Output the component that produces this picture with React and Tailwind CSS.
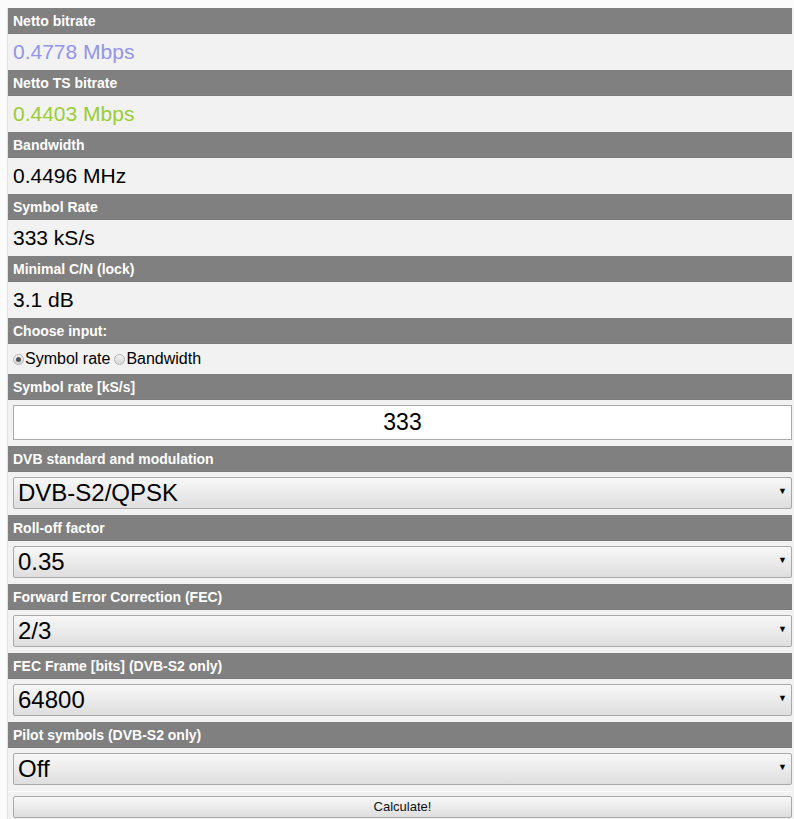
import React, { useState } from 'react'

const Header = ({ children }) => (
    <div className='h-[26px] bg-[#808080] text-white font-bold text-[14px] leading-[26px] pl-[5px] border-b border-[#7a7a7a]'>{children}</div>
)

const Value = ({ children, color }) => (
    <div className={`h-[36px] pl-[5px] text-[21px] leading-[36px] ${color}`}>{children}</div>
)

const Radio = ({ checked, label, onClick }) => (
    <span className='flex items-center cursor-pointer' onClick={onClick}>
        <span className='w-[11px] h-[11px] rounded-full border border-[#b4b4b4] bg-gradient-to-b from-[#f4f4f4] to-[#d6d6d6] flex items-center justify-center mr-[1px]'>
            {checked && <span className='w-[5px] h-[5px] rounded-full bg-[#555]' />}
        </span>
        {label}
    </span>
)

const Select = ({ value, options }) => (
    <div className='h-[43px] pl-[5px] pt-[5px]'>
        <div className='relative h-[32px]'>
            <select
                defaultValue={value}
                className='appearance-none w-full h-full border border-[#a9a9a9] rounded-[2px] bg-gradient-to-b from-[#f8f8f8] to-[#dedede] text-[24px] leading-[30px] pl-[4px] text-black outline-none'
            >
                {options.map((o) => <option key={o} value={o}>{o}</option>)}
            </select>
            <span className='absolute right-[5px] top-[10px] text-[9px] leading-none text-black pointer-events-none'>▼</span>
        </div>
    </div>
)

export default function App() {
    const [mode, setMode] = useState('symbol')
    return (
        <div className='min-h-[819px] bg-[#fbfbfb] pt-[8px] pl-[7px]' style={{ fontFamily: '"Liberation Sans", Arial, sans-serif' }}>
            <div className='bg-[#f2f2f2] border-l border-[#e2e2e2] pr-[2px] text-[#111]'>
                <Header>Netto bitrate</Header>
                <Value color='text-[#9494ee]'>0.4778 Mbps</Value>
                <Header>Netto TS bitrate</Header>
                <Value color='text-[#9acd32]'>0.4403 Mbps</Value>
                <Header>Bandwidth</Header>
                <Value color='text-black'>0.4496 MHz</Value>
                <Header>Symbol Rate</Header>
                <Value color='text-black'>333 kS/s</Value>
                <Header>Minimal C/N (lock)</Header>
                <Value color='text-black'>3.1 dB</Value>
                <Header>Choose input:</Header>
                <div className='h-[30px] pl-[5px] flex items-center text-[16px] text-black'>
                    <Radio checked={mode === 'symbol'} label='Symbol rate' onClick={() => setMode('symbol')} />
                    <span className='w-[4px]' />
                    <Radio checked={mode === 'bandwidth'} label='Bandwidth' onClick={() => setMode('bandwidth')} />
                </div>
                <Header>Symbol rate [kS/s]</Header>
                <div className='h-[46px] pl-[5px] pt-[5px]'>
                    <input
                        type='text'
                        defaultValue='333'
                        className='w-full h-[35px] border border-[#a9a9a9] bg-white text-center text-[23px] text-black outline-none'
                    />
                </div>
                <Header>DVB standard and modulation</Header>
                <Select value='DVB-S2/QPSK' options={['DVB-S/QPSK', 'DVB-S2/QPSK', 'DVB-S2/8PSK', 'DVB-S2/16APSK', 'DVB-S2/32APSK']} />
                <Header>Roll-off factor</Header>
                <Select value='0.35' options={['0.35', '0.25', '0.20']} />
                <Header>Forward Error Correction (FEC)</Header>
                <Select value='2/3' options={['1/2', '2/3', '3/4', '5/6', '7/8']} />
                <Header>FEC Frame [bits] (DVB-S2 only)</Header>
                <Select value='64800' options={['64800', '16200']} />
                <Header>Pilot symbols (DVB-S2 only)</Header>
                <Select value='Off' options={['Off', 'On']} />
                <div className='pl-[5px] pt-[2px] pb-[4px] border-t border-[#fafafa]'>
                    <button className='w-full h-[22px] border border-[#a9a9a9] rounded-[2px] bg-gradient-to-b from-[#f8f8f8] to-[#dedede] text-[13px] text-[#111] leading-[20px]'>Calculate!</button>
                </div>
            </div>
        </div>
    )
}
